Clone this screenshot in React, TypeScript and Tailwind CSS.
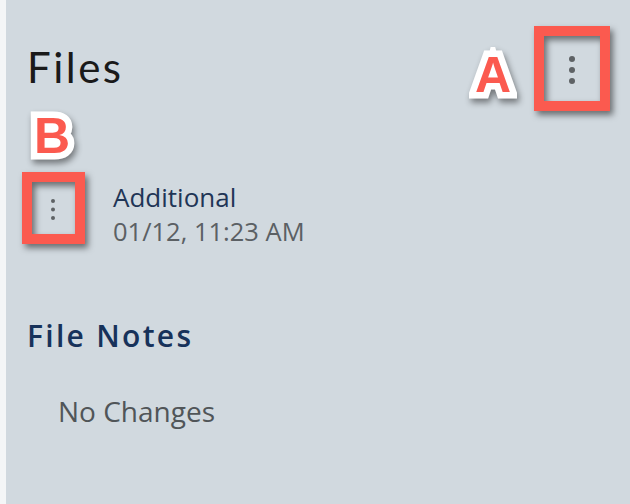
import React from "react";

function Kebab({ w, h, cx, cys, r }: { w: number; h: number; cx: number; cys: number[]; r: number }) {
  return (
    <svg width={w} height={h} viewBox={`0 0 ${w} ${h}`} className="block shrink-0">
      {cys.map((cy, i) => (
        <circle key={i} cx={cx} cy={cy} r={r} fill="#5e6265" />
      ))}
    </svg>
  );
}

function Label({ ch, left, top }: { ch: string; left: number; top: number }) {
  return (
    <div className="absolute" style={{ left, top }}>
      <span
        className="absolute left-0 top-0 text-[50px] leading-none font-bold text-white [-webkit-text-stroke:13px_white] [filter:drop-shadow(2px_4px_3px_rgba(0,0,0,0.45))]"
        style={{ fontFamily: '"Liberation Sans", Arial, sans-serif' }}
      >
        {ch}
      </span>
      <span
        className="relative text-[50px] leading-none font-bold text-[#fb5a4f]"
        style={{ fontFamily: '"Liberation Sans", Arial, sans-serif' }}
      >
        {ch}
      </span>
    </div>
  );
}

export default function App() {
  return (
    <div className="relative w-[630px] h-[504px] flex bg-white overflow-hidden">
      <div className="w-[6px] shrink-0 bg-[#f4f6f7]" />
      <div className="flex-1 bg-[#d1d9df] flex flex-col pl-[21px] pr-[46px]" style={{ fontFamily: '"Open Sans", "Noto Sans", sans-serif' }}>
        <div className="mt-[46px] h-[42px] flex justify-between items-start">
          <span className="text-[42px] leading-none font-normal text-[#1a1a1a] tracking-[2.5px]" style={{ fontFamily: 'Lato, "Open Sans", sans-serif' }}>
            Files
          </span>
          <Kebab w={24} h={42} cx={12} cys={[13, 24, 35]} r={3} />
        </div>

        <div className="mt-[96px] flex items-start">
          <div className="ml-[14px]">
            <Kebab w={24} h={40} cx={12} cys={[17, 25.5, 34]} r={2} />
          </div>
          <div className="ml-[48px] flex flex-col">
            <span className="text-[26px] leading-none text-[#1f3556]">Additional</span>
            <span className="mt-[9px] text-[25.5px] leading-none text-[#5b6064]">01/12, 11:23 AM</span>
          </div>
        </div>

        <div className="mt-[76px] text-[30px] leading-none font-semibold tracking-[2.3px] text-[#17325a]">File Notes</div>
        <div className="mt-[46px] ml-[31px] text-[28px] leading-none text-[#505558]">No Changes</div>
      </div>

      <div className="absolute left-[534px] top-[26px] w-[76px] h-[85px] border-[10px] border-[#fb5a4f] [filter:drop-shadow(3px_4px_3px_rgba(0,0,0,0.5))]" />
      <div className="absolute left-[22px] top-[172px] w-[63px] h-[72px] border-[10px] border-[#fb5a4f] [filter:drop-shadow(3px_4px_3px_rgba(0,0,0,0.5))]" />

      <Label ch="A" left={475} top={50} />
      <Label ch="B" left={34} top={111} />
    </div>
  );
}
